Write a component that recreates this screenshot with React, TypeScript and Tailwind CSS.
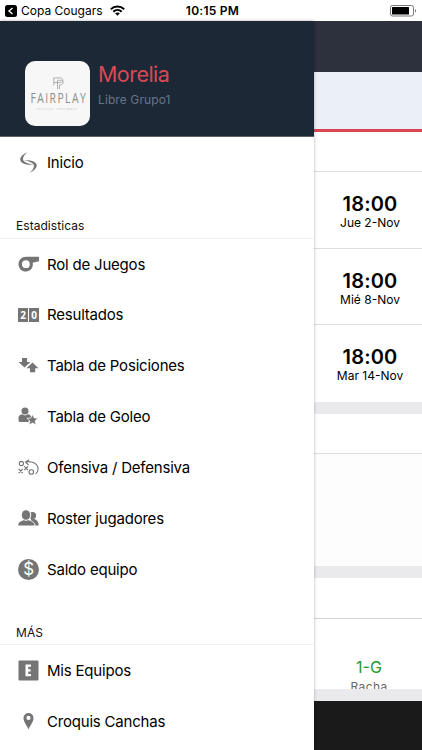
import React from 'react';

const iconCls = 'w-[21px] h-[21px] shrink-0 fill-[#757575]';

const blade = 'M9.500 .3C5 2 2 5 2.300 8C2.600 11.200 8 13.400 16 12.700C9.500 11.900 4.700 9.700 5 7C5.200 4.500 7 2 9.500 .3Z';

// Two mirrored blades forming the "S"
const HomeIcon = () => (
  <svg viewBox="0 0 21 21" className={iconCls}>
    <path d={blade} />
    <path d={blade} transform="rotate(180 10.500 10.500)" />
  </svg>
);

const WhistleIcon = () => (
  <svg viewBox="0 0 21 21" className={iconCls}>
    <path fillRule="evenodd" d="M8 2.800H21V7.200L14.700 8.800C15.600 13.800 12.400 17.500 7.900 17.500C3.600 17.500 .5 14.200 .5 10.200C.5 6.100 3.800 2.800 8 2.800ZM7.900 6.300A3.900 3.900 0 1 0 7.900 14.100A3.900 3.900 0 1 0 7.900 6.300Z" />
  </svg>
);

const ScoreIcon = () => (
  <span className="flex h-[14px] w-[21px] shrink-0 gap-px">
    {['2', '0'].map(n => (
      <span key={n} className="flex flex-1 items-center justify-center bg-[#757575] font-['Open_Sans',sans-serif] text-[10px] leading-none font-bold text-white">{n}</span>
    ))}
  </span>
);

const ArrowsIcon = () => (
  <svg viewBox="0 0 21 21" className={iconCls}>
    <path d="M4 3H9V7H12.500L6.500 12.500L.5 7H4ZM14.500 7.500L20.500 13.200H17.200V17.300H12V13.200H8.500Z" />
  </svg>
);

const ScorerIcon = () => (
  <svg viewBox="0 0 21 21" className={iconCls}>
    <circle cx="7" cy="5" r="3.500" />
    <path d="M4 8.300L7 9.500L10 8.300C11.800 8.600 13 9.700 13.300 11.500L8.500 12L11 14.500L10.500 16H2C.9 16 .5 15.200 .5 14V12C.5 10 2 8.500 4 8.300Z" />
    <path d="M14.500 8.800L16 12.100L19.500 12.600L16.900 15L17.700 18.500L14.500 16.700L11.300 18.500L12.100 15L9.500 12.600L13 12.100Z" className="stroke-white" strokeWidth=".3" />
  </svg>
);

const TacticsIcon = () => (
  <svg viewBox="0 0 21 21" className="w-[21px] h-[21px] shrink-0 fill-none stroke-[#757575]" strokeWidth="1.100">
    <circle cx="3.400" cy="6.500" r="2.100" />
    <circle cx="13.300" cy="15" r="2.300" />
    <path d="M.7 12L4.700 16M4.700 12L.7 16M6.300 9.300L10 13M10 9.300L6.300 13M17.500 16.800C22 13.500 20.500 6.500 13.500 5C11.500 4.500 9.500 4.500 8 4.900M11 2.700L7.500 5L10.500 8" />
  </svg>
);

const RosterIcon = () => (
  <svg viewBox="0 0 21 21" className={iconCls}>
    <circle cx="14.500" cy="7.500" r="3.600" />
    <path d="M13 11H16.500C19 12 20.700 14 20.700 17.600H13Z" />
    <g className="stroke-white" strokeWidth="1">
      <path d="M-.2 18V16.500C.2 13.700 2.500 13.100 6 11.500H10C13.500 13.100 16.600 13.700 17 18Z" />
      <ellipse cx="8" cy="7" rx="4.700" ry="5.300" />
    </g>
  </svg>
);

const BalanceIcon = () => (
  <span className="flex size-[21px] shrink-0 items-center justify-center rounded-full bg-[#757575] text-[17px] leading-none text-white">$</span>
);

const TeamsIcon = () => (
  <svg viewBox="0 0 21 21" className={iconCls}>
    <rect x=".5" y=".5" width="20" height="20" rx="1" />
    <path d="M7.500 4.500H13V6.800H10.200V9.200H12.600V11.400H10.200V14H13V16.300H7.500Z" className="fill-white" />
  </svg>
);

const PinIcon = () => (
  <svg viewBox="0 0 21 21" className={iconCls}>
    <path fillRule="evenodd" d="M10.500 2A5 5 0 0 1 15.500 7C15.500 11 12 14.500 10.500 18.500C9 14.500 5.500 11 5.500 7A5 5 0 0 1 10.500 2ZM10.500 4.800A2.100 2.100 0 1 0 10.500 9A2.100 2.100 0 1 0 10.500 4.800Z" />
  </svg>
);

const stats = [
  { label: 'Rol de Juegos', Icon: WhistleIcon },
  { label: 'Resultados', Icon: ScoreIcon },
  { label: 'Tabla de Posiciones', Icon: ArrowsIcon },
  { label: 'Tabla de Goleo', Icon: ScorerIcon },
  { label: 'Ofensiva / Defensiva', Icon: TacticsIcon },
  { label: 'Roster jugadores', Icon: RosterIcon },
  { label: 'Saldo equipo', Icon: BalanceIcon },
];

const more = [
  { label: 'Mis Equipos', Icon: TeamsIcon },
  { label: 'Croquis Canchas', Icon: PinIcon },
];

const games = ['Jue 2-Nov', 'Mié 8-Nov', 'Mar 14-Nov'];

const MenuRow: React.FC<{ label: string; Icon: React.FC }> = ({ label, Icon }) => (
  <a className="flex h-[50.85px] shrink-0 items-center gap-2 pl-[18px] text-[15px] tracking-[-0.2px] text-black">
    <Icon />
    <span className="pt-[1.500px]">{label}</span>
  </a>
);

const SectionTitle: React.FC<{ children: string }> = ({ children }) => (
  <h2 className="flex h-[50.85px] shrink-0 items-end border-b border-[#f1f1f1] pb-[2.500px] pl-4 text-[12px] leading-[18px] tracking-[0.05px] text-[#111]">{children}</h2>
);

const StatusBar = () => (
  <div className="grid h-[21px] shrink-0 grid-cols-3 items-center bg-white text-[12px] text-black">
    <div className="flex items-center pl-[5px]">
      <svg viewBox="0 0 12 12" className="size-3 shrink-0">
        <rect width="12" height="12" rx="2.500" />
        <path d="M7.500 3L4 6L7.500 9" fill="none" stroke="#fff" strokeWidth="1.400" />
      </svg>
      <span className="ml-1 whitespace-nowrap">Copa Cougars</span>
      <svg viewBox="0 0 15 11" className="ml-[7px] h-[11px] w-[15px] shrink-0" fill="none" stroke="#000" strokeWidth="1.900">
        <path d="M.8 4.200C4.500 .6 10.500 .6 14.200 4.200M3.300 6.700C5.700 4.500 9.300 4.500 11.700 6.700" />
        <path d="M7.500 10.700L5.100 8.300C6.500 7.100 8.500 7.100 9.900 8.300Z" fill="#000" stroke="none" />
      </svg>
    </div>
    <div className="pl-[3px] text-center font-semibold tracking-[0.250px]">10:15 PM</div>
    <svg viewBox="0 0 27 12" className="mr-[5px] h-3 w-[27px] justify-self-end">
      <rect x=".5" y=".5" width="23" height="10.500" rx="2" fill="none" stroke="#777" />
      <rect x="2" y="2" width="17" height="7.500" rx=".5" />
      <path d="M25 4.200C26.500 4.500 26.500 7.100 25 7.400Z" fill="#777" />
    </svg>
  </div>
);

const TeamLogo = () => (
  <div className="flex size-[65px] shrink-0 flex-col items-center rounded-[10px] bg-[#f7f7f7] pt-4 text-[#8d8d8d]">
    <svg viewBox="0 0 12 14" className="h-[13px] w-3 shrink-0" fill="none" stroke="#999" strokeWidth=".8">
      <path d="M1.500 9V1H8.500C12 1 12 6 8.500 6H1.500M5.500 13V3.500H10M7.500 13V8.500C12.500 9 12.500 3.500 10 3.500" />
    </svg>
    <span className="mt-[1px] origin-center scale-x-[.86] scale-y-[1.2] pl-[2px] font-['Open_Sans',sans-serif] text-[12px] leading-[14px] tracking-[1.700px]">FAIRPLAY</span>
    <span className="mt-[3px] scale-x-[.8] text-[2.500px] leading-[4px] tracking-[.6px] whitespace-nowrap text-[#bbb]">HAZLO FAIR · JUEGA BONITO</span>
  </div>
);

const Drawer = () => (
  <nav className="relative flex w-[314px] shrink-0 flex-col bg-white shadow-[0_0_3px_rgba(0,0,0,0.3)]">
    <header className="flex h-[116px] shrink-0 border-b border-[#625e67] bg-[#1d2836] pt-[39.500px] pl-[25px]">
      <TeamLogo />
      <div className="ml-2">
        <h1 className="-mt-px text-[21.500px] leading-7 tracking-[-0.55px] text-[#d94854]">Morelia</h1>
        <p className="mt-[4px] text-[12px] leading-4 tracking-[0.1px] text-[#66758a]">Libre Grupo1</p>
      </div>
    </header>
    <MenuRow label="Inicio" Icon={HomeIcon} />
    <SectionTitle>Estadisticas</SectionTitle>
    {stats.map(item => <MenuRow key={item.label} {...item} />)}
    <SectionTitle>MÁS</SectionTitle>
    {more.map(item => <MenuRow key={item.label} {...item} />)}
  </nav>
);

const SchedulePage = () => (
  <main className="flex flex-1 flex-col bg-white text-center text-black">
    <div className="h-[51px] shrink-0 bg-[#2d303d]" />
    <div className="h-[60px] shrink-0 border-b-[3px] border-[#d9464f] bg-[#ebeff8]" />
    <div className="h-10 shrink-0 border-b border-[#dedede]" />
    {games.map((day, i) => (
      <div key={day} className={`h-[76.500px] shrink-0 pt-[20px] pl-[4px] ${i < games.length - 1 ? 'border-b border-[#dedede]' : ''}`}>
        <div className="text-[20px] leading-[24px] font-semibold tracking-[0.2px]">18:00</div>
        <div className="-mt-px text-[12px] leading-4">{day}</div>
      </div>
    ))}
    <div className="h-3 shrink-0 bg-[#eaeaec]" />
    <div className="h-10 shrink-0 border-b border-[#dedede]" />
    <div className="h-[112.500px] shrink-0 bg-[#fdfdfd]" />
    <div className="h-3 shrink-0 bg-[#eaeaec]" />
    <div className="h-[41px] shrink-0 border-b border-[#d4d4d4]" />
    <div className="h-[69.500px] shrink-0 overflow-hidden pt-[38px] pl-[2px]">
      <div className="text-[16px] leading-5 text-[#25982a]">1-G</div>
      <div className="mt-[2px] text-[12px] leading-4 tracking-[0.4px] text-[#666]">Racha</div>
    </div>
    <div className="h-3 shrink-0 bg-[#eaeaec]" />
    <div className="flex-1 bg-[#1a1a1a]" />
  </main>
);

export default function App() {
  return (
    <div className="flex h-[750px] w-[422px] flex-col overflow-hidden bg-white font-[Inter,sans-serif]">
      <StatusBar />
      <div className="flex min-h-0 flex-1">
        <Drawer />
        <SchedulePage />
      </div>
    </div>
  );
}
